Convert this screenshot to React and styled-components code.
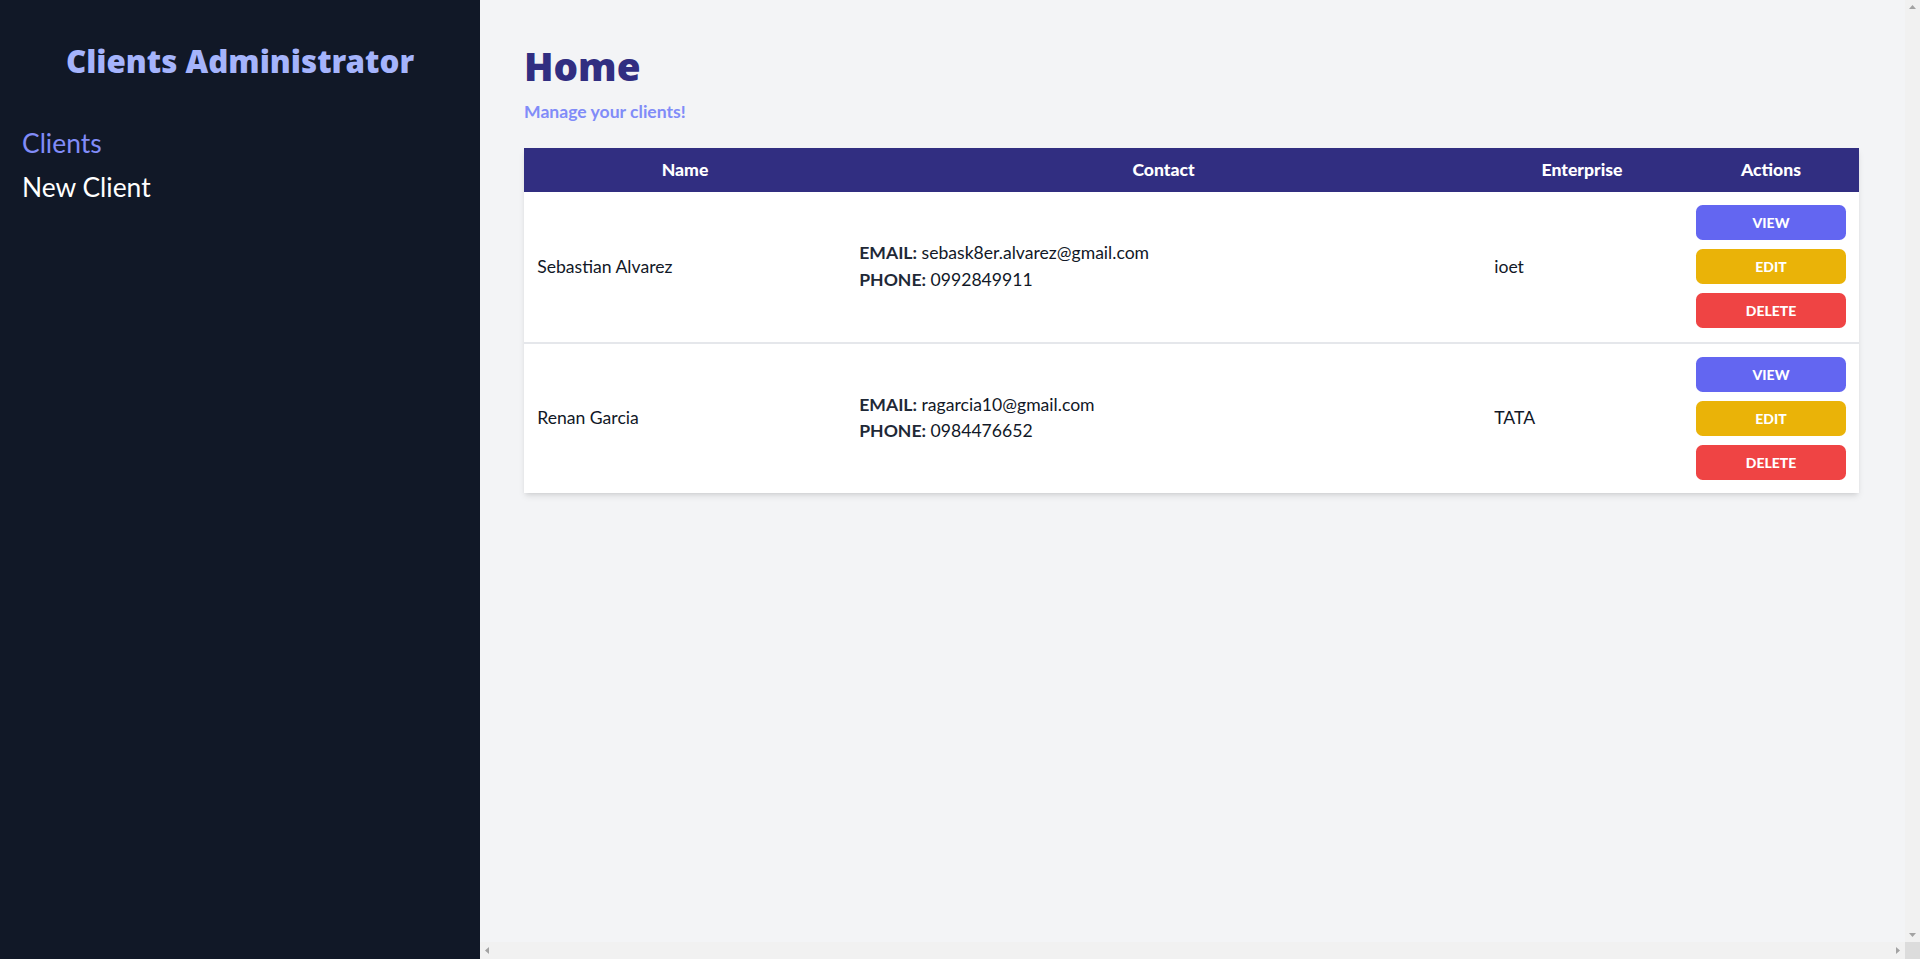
import React from 'react';
import styled, { createGlobalStyle } from 'styled-components';

const GlobalStyle = createGlobalStyle`
  * { box-sizing: border-box; }
  html, body { margin: 0; padding: 0; height: 100%; }
  body {
    font-family: Lato, "Noto Sans", "Liberation Sans", sans-serif;
    color: #111827;
  }
  #root { height: 100%; }
`;

const headingFont = `"Noto Sans", Lato, "Liberation Sans", sans-serif`;

const Layout = styled.div`
  display: flex;
  height: 100vh;
`;

const Sidebar = styled.aside`
  width: 480px;
  flex-shrink: 0;
  background: #111827;
  padding: 42px 22px 0;
`;

const Brand = styled.h2`
  margin: 0;
  text-align: center;
  font-family: ${headingFont};
  font-size: 31.3px;
  line-height: 39.6px;
  font-weight: 900;
  color: #a5b4fc;
`;

const Nav = styled.nav`
  display: flex;
  flex-direction: column;
  gap: 8.8px;
  margin-top: 44.4px;
`;

const NavLink = styled.a`
  font-size: 26.4px;
  line-height: 35.2px;
  color: ${(p) => (p.$active ? '#818cf8' : '#ffffff')};
  text-decoration: none;
  cursor: pointer;
`;

const Main = styled.main`
  flex: 1;
  min-width: 0;
  display: grid;
  grid-template-columns: 1fr 15px;
  grid-template-rows: 1fr 17px;
  background: #f3f4f6;
`;

const Content = styled.div`
  overflow: hidden;
  padding: 44px 46px 44px 44px;
`;

const VScroll = styled.div`
  background: #f1f1f1;
  display: flex;
  flex-direction: column;
  justify-content: space-between;
  align-items: center;
  padding: 5px 0;
`;

const HScroll = styled.div`
  background: #f1f1f1;
  display: flex;
  justify-content: space-between;
  align-items: center;
  padding: 0 5px;
`;

const Corner = styled.div`
  background: #dcdcdc;
`;

const Arrow = ({ dir }) => {
  const pts = {
    up: '0,4 3.5,0 7,4',
    down: '0,0 3.5,4 7,0',
    left: '4,0 0,3.5 4,7',
    right: '0,0 4,3.5 0,7',
  }[dir];
  const vertical = dir === 'up' || dir === 'down';
  return (
    <svg width={vertical ? 7 : 4} height={vertical ? 4 : 7} viewBox={vertical ? '0 0 7 4' : '0 0 4 7'}>
      <polygon points={pts} fill="#a3a3a3" />
    </svg>
  );
};

const Title = styled.h1`
  margin: 0;
  font-family: ${headingFont};
  font-size: 38.6px;
  line-height: 44px;
  font-weight: 900;
  color: #312e81;
`;

const Subtitle = styled.p`
  margin: 11px 0 0;
  font-size: 17.6px;
  line-height: 26.4px;
  font-weight: 700;
  color: #818cf8;
`;

const Table = styled.table`
  width: 100%;
  margin-top: 22.6px;
  border-collapse: collapse;
  table-layout: fixed;
  background: #ffffff;
  box-shadow: 0 4.4px 6.6px -1px rgba(0, 0, 0, 0.1), 0 2.2px 4.4px -2px rgba(0, 0, 0, 0.1);
`;

const HeadRow = styled.tr`
  background: #312e81;
`;

const Th = styled.th`
  width: ${(p) => p.$w}px;
  padding: 8.8px 13.2px;
  font-size: 17.6px;
  line-height: 26.4px;
  font-weight: 900;
  color: #ffffff;
  text-align: center;
`;

const Row = styled.tr`
  border-bottom: 2px solid #e5e7eb;
  &:last-child { border-bottom: none; }
`;

const Td = styled.td`
  padding: 13.2px;
  font-size: 17.6px;
  line-height: 26.4px;
  vertical-align: middle;
  color: #111827;
`;

const Label = styled.span`
  font-weight: 700;
  color: #1f2937;
`;

const Actions = styled.div`
  display: flex;
  flex-direction: column;
  gap: 8.8px;
`;

const colors = {
  view: '#6366f1',
  edit: '#eab308',
  delete: '#ef4444',
};

const ActionButton = styled.button`
  height: 35.2px;
  width: 100%;
  border: none;
  border-radius: 6.6px;
  background: ${(p) => colors[p.$kind]};
  color: #ffffff;
  font-family: inherit;
  font-size: 14px;
  font-weight: 900;
  text-transform: uppercase;
  cursor: pointer;
`;

const clients = [
  { name: 'Sebastian Alvarez', email: 'sebask8er.alvarez@gmail.com', phone: '0992849911', enterprise: 'ioet' },
  { name: 'Renan Garcia', email: 'ragarcia10@gmail.com', phone: '0984476652', enterprise: 'TATA' },
];

export default function App() {
  return (
    <>
      <GlobalStyle />
      <Layout>
        <Sidebar>
          <Brand>Clients Administrator</Brand>
          <Nav>
            <NavLink $active>Clients</NavLink>
            <NavLink>New Client</NavLink>
          </Nav>
        </Sidebar>
        <Main>
          <Content>
            <Title>Home</Title>
            <Subtitle>Manage your clients!</Subtitle>
            <Table>
              <thead>
                <HeadRow>
                  <Th $w={322}>Name</Th>
                  <Th $w={635}>Contact</Th>
                  <Th $w={202}>Enterprise</Th>
                  <Th $w={176}>Actions</Th>
                </HeadRow>
              </thead>
              <tbody>
                {clients.map((c) => (
                  <Row key={c.email}>
                    <Td>{c.name}</Td>
                    <Td>
                      <div><Label>EMAIL:</Label> {c.email}</div>
                      <div><Label>PHONE:</Label> {c.phone}</div>
                    </Td>
                    <Td>{c.enterprise}</Td>
                    <Td>
                      <Actions>
                        <ActionButton $kind="view">View</ActionButton>
                        <ActionButton $kind="edit">Edit</ActionButton>
                        <ActionButton $kind="delete">Delete</ActionButton>
                      </Actions>
                    </Td>
                  </Row>
                ))}
              </tbody>
            </Table>
          </Content>
          <VScroll>
            <Arrow dir="up" />
            <Arrow dir="down" />
          </VScroll>
          <HScroll>
            <Arrow dir="left" />
            <Arrow dir="right" />
          </HScroll>
          <Corner />
        </Main>
      </Layout>
    </>
  );
}
